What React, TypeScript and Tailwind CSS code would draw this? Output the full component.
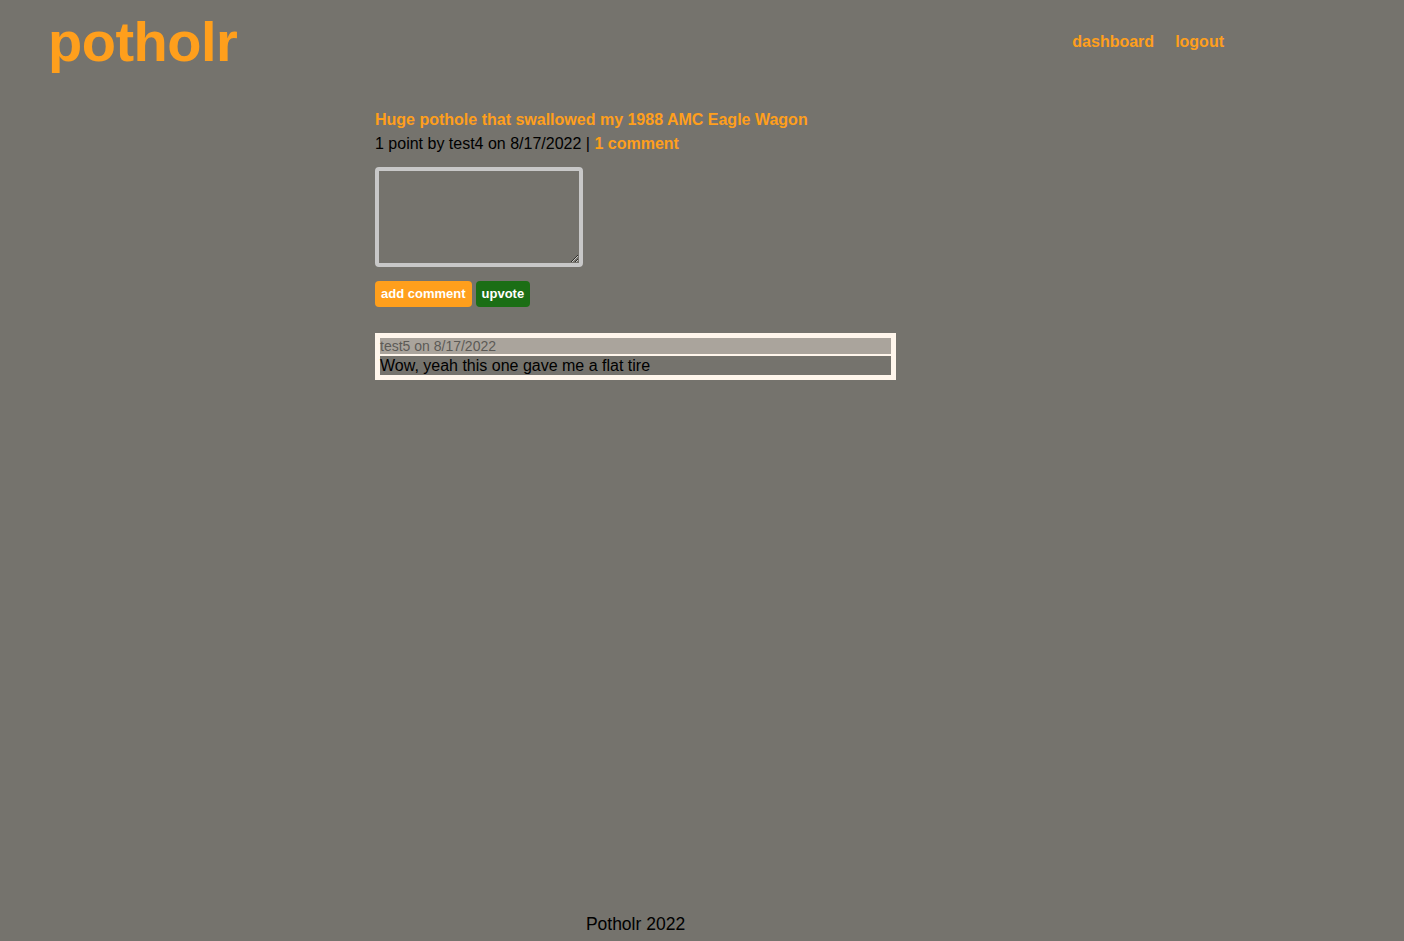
import React from 'react';

const orange = 'text-[#ff9f1c]';

export default function App() {
  return (
    <div className="min-h-screen bg-[#75736d] flex flex-col font-['Liberation_Sans',Arial,sans-serif] text-black">
      {/* Header */}
      <header className="flex items-start justify-between pl-[48px] pr-[180px] pt-[10px] h-[105px]">
        <h1 className={`${orange} font-bold text-[56px] leading-[64px] tracking-[-0.5px]`}>potholr</h1>
        <nav className="flex gap-[21px] pt-[20px] text-[16px] font-bold">
          <a className={orange} href="#">dashboard</a>
          <a className={orange} href="#">logout</a>
        </nav>
      </header>

      {/* Main */}
      <main className="flex-1 pl-[375px]">
        <div className="w-[521px]">
          <a href="#" className={`${orange} block font-bold text-[16px] leading-[19px] pt-[5px]`}>
            Huge pothole that swallowed my 1988 AMC Eagle Wagon
          </a>
          <p className="text-[16px] leading-[19px] mt-[5px]">
            1 point by test4 on 8/17/2022 | <a href="#" className={`${orange} font-bold`}>1 comment</a>
          </p>

          <form className="mt-[14px]">
            <textarea className="block w-[208px] h-[100px] border-[4px] border-[#c8c8c8] rounded-[4px] bg-transparent outline-none" />
            <div className="flex gap-[4px] mt-[14px]">
              <button type="button" className="bg-[#ff9f1c] text-white font-bold text-[13px] leading-[16px] px-[6px] h-[26px] rounded-[4px]">
                add comment
              </button>
              <button type="button" className="bg-[#1b6e15] text-white font-bold text-[13px] leading-[16px] px-[6px] h-[26px] rounded-[4px]">
                upvote
              </button>
            </div>
          </form>

          <div className="mt-[26px] border-[5px] border-[#fff6ec] bg-[#fff6ec] flex flex-col gap-[2px]">
            <div className="bg-[#aaa49c] text-[#5c5a56] text-[14px] leading-[16px]">test5 on 8/17/2022</div>
            <div className="bg-[#75736d] text-[16px] leading-[19px]">Wow, yeah this one gave me a flat tire</div>
          </div>
        </div>
      </main>

      {/* Footer */}
      <footer className="pl-[375px] pb-[7px]">
        <p className="w-[521px] text-center text-[17.5px] leading-[20px] pt-[1px]">Potholr 2022</p>
      </footer>
    </div>
  );
}
